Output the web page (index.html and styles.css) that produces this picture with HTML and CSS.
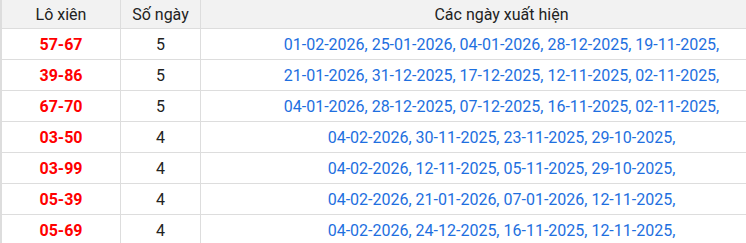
FILE: index.html
```html
<!DOCTYPE html>
<html lang="vi">
<head>
<meta charset="utf-8">
<link rel="stylesheet" href="styles.css">
</head>
<body>
<table class="lx">
  <thead>
    <tr><th class="c1">Lô xiên</th><th class="c2">Số ngày</th><th class="c3">Các ngày xuất hiện</th></tr>
  </thead>
  <tbody>
    <tr><td class="pair">57-67</td><td class="cnt">5</td><td class="dates">01-02-2026, 25-01-2026, 04-01-2026, 28-12-2025, 19-11-2025,</td></tr>
    <tr><td class="pair">39-86</td><td class="cnt">5</td><td class="dates">21-01-2026, 31-12-2025, 17-12-2025, 12-11-2025, 02-11-2025,</td></tr>
    <tr><td class="pair">67-70</td><td class="cnt">5</td><td class="dates">04-01-2026, 28-12-2025, 07-12-2025, 16-11-2025, 02-11-2025,</td></tr>
    <tr><td class="pair">03-50</td><td class="cnt">4</td><td class="dates">04-02-2026, 30-11-2025, 23-11-2025, 29-10-2025,</td></tr>
    <tr><td class="pair">03-99</td><td class="cnt">4</td><td class="dates">04-02-2026, 12-11-2025, 05-11-2025, 29-10-2025,</td></tr>
    <tr><td class="pair">05-39</td><td class="cnt">4</td><td class="dates">04-02-2026, 21-01-2026, 07-01-2026, 12-11-2025,</td></tr>
    <tr><td class="pair">05-69</td><td class="cnt">4</td><td class="dates">04-02-2026, 24-12-2025, 16-11-2025, 12-11-2025,</td></tr>
  </tbody>
</table>
</body>
</html>
```
FILE: styles.css
```css
html, body {
  margin: 0;
  padding: 0;
  background: #fff;
  overflow: hidden;
}
body {
  font-family: Roboto, "Liberation Sans", Arial, sans-serif;
  font-size: 16px;
  color: #222;
}
.lx {
  border-collapse: collapse;
  table-layout: fixed;
  width: 746px;
}
.lx th, .lx td {
  border: 1px solid #ddd;
  padding: 0;
  text-align: center;
  vertical-align: middle;
  white-space: nowrap;
}
.lx th {
  background: #f2f2f2;
  font-weight: 400;
  height: 28px;
  border-top: none;
}
.lx td {
  height: 30px;
}
.lx .c1 { width: 118px; }
.lx .c2 { width: 79px; }
.lx th:first-child, .lx td:first-child {
  border-left: 2px solid #ddd;
}
.lx th:last-child, .lx td:last-child {
  border-right: none;
  padding-left: 56px;
}
.pair {
  color: #f00;
  font-weight: 700;
}
.cnt {
  color: #222;
}
.dates {
  color: #1e6fe0;
}
```
